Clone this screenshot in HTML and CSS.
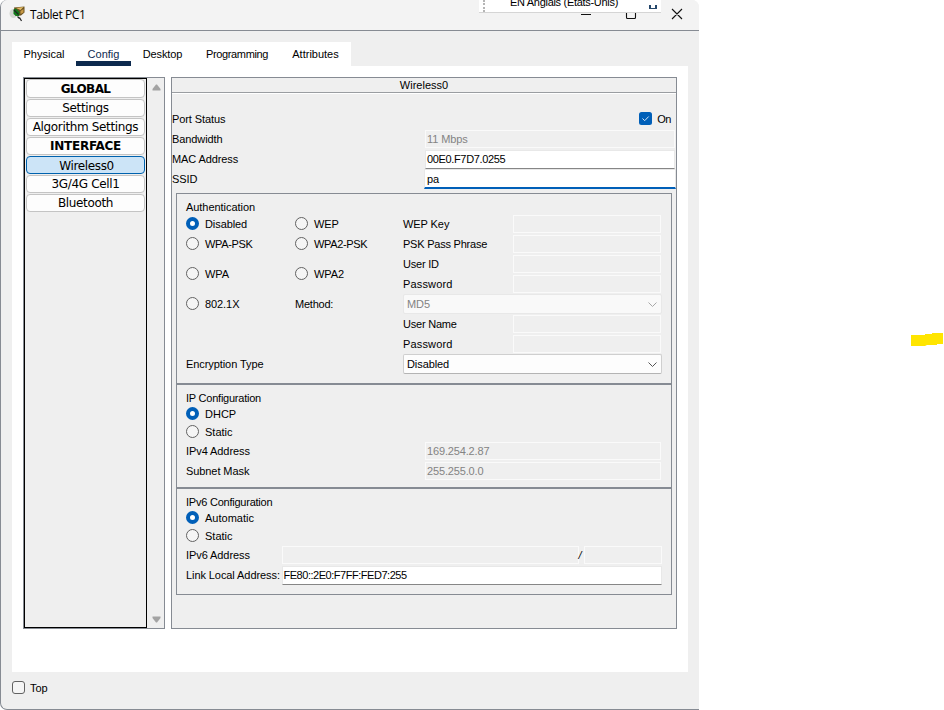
FILE: index.html
```
<!DOCTYPE html>
<html lang="en">
<head>
<meta charset="utf-8">
<title>Tablet PC1</title>
<link rel="stylesheet" href="styles.css">
</head>
<body>
<div class="window">
  <header class="titlebar">
    <svg class="app-icon" width="16" height="16" viewBox="0 0 16 16">
      <ellipse cx="4.500" cy="7.500" rx="4" ry="4.500" fill="#d3d6d1"/>
      <path d="M5 1.500L15.500 .5V6.500L12 9.500 6.500 10z" fill="#6d5320"/>
      <path d="M7 2L14.500 1 11.500 4z" fill="#e5bd68"/>
      <path d="M11.500 5L14.500 3V6.500L11.500 8z" fill="#c89a45"/>
      <path d="M4.500 3.500L7 2.500 10.500 6 10 10 7 10 4.500 8z" fill="#107a18"/>
      <path d="M5 4L9.500 8.500M8.500 10.500L10.500 12.500M10.500 11.500L12.500 15" stroke="#222" stroke-width="1.200" fill="none"/>
    </svg>
    <h1 class="title">Tablet PC1</h1>
    <div class="controls">
      <svg width="102" height="12" viewBox="0 0 102 12">
        <path d="M0 6.500H10M45.500 1V9.500Q45.500 10.500 46.500 10.500H53.500Q54.500 10.500 54.500 9.500V1M91 1L101 11M101 1L91 11" stroke="#111" stroke-width="1.100" fill="none"/>
      </svg>
    </div>
  </header>

  <div class="client">
    <nav class="tabs">
      <span class="tab t1">Physical</span>
      <span class="tab t2 active">Config</span>
      <span class="tab t3">Desktop</span>
      <span class="tab t4">Programming</span>
      <span class="tab t5">Attributes</span>
    </nav>
    <main class="page">
      <aside class="side">
        <div class="side-list">
          <div class="item head tight">GLOBAL</div>
          <div class="item">Settings</div>
          <div class="item">Algorithm Settings</div>
          <div class="item head">INTERFACE</div>
          <div class="item selected">Wireless0</div>
          <div class="item">3G/4G Cell1</div>
          <div class="item">Bluetooth</div>
        </div>
        <div class="scroll">
          <svg width="9" height="7" viewBox="0 0 9 7"><path d="M4 .5H5L8.500 5V6.500H.5V5z" fill="#a3a3a3"/></svg>
          <svg width="9" height="7" viewBox="0 0 9 7"><path d="M4 6.500H5L8.500 2V.5H.5V2z" fill="#a3a3a3"/></svg>
        </div>
      </aside>

      <section class="panel">
        <div class="panel-title">Wireless0</div>
        <div class="port">
          <div class="row"><span>Port Status</span>
            <label class="on"><svg width="13" height="13" viewBox="0 0 13 13"><rect width="13" height="13" rx="2.500" fill="#005fb8"/><path d="M3.500 6.500L5.700 8.700 9.700 4.500" stroke="#d5e6f5" fill="none"/></svg>On</label></div>
          <div class="row"><span>Bandwidth</span><div class="field off">11 Mbps</div></div>
          <div class="row"><span>MAC Address</span><div class="field edit mac">00E0.F7D7.0255</div></div>
          <div class="row"><span>SSID</span><div class="field focus">pa</div></div>
        </div>

        <div class="group auth">
          <div class="group-title auth-title">Authentication</div>
          <div class="auth-grid">
            <label class="radio c1 r1"><i class="dot checked"></i>Disabled</label>
            <label class="radio c2 r1"><i class="dot"></i>WEP</label>
            <span class="c3 r1">WEP Key</span><div class="field off c4 r1"></div>
            <label class="radio c1 r2 psk"><i class="dot"></i>WPA-PSK</label>
            <label class="radio c2 r2 psk"><i class="dot"></i>WPA2-PSK</label>
            <span class="c3 r2 phrase">PSK Pass Phrase</span><div class="field off c4 r2"></div>
            <label class="radio c1 r34"><i class="dot"></i>WPA</label>
            <label class="radio c2 r34"><i class="dot"></i>WPA2</label>
            <span class="c3 r3 phrase">User ID</span><div class="field off c4 r3"></div>
            <span class="c3 r4 wide">Password</span><div class="field off c4 r4"></div>
            <label class="radio c1 r5"><i class="dot"></i>802.1X</label>
            <span class="c2 r5 phrase">Method:</span>
            <div class="combo off-combo r5">MD5<svg width="9" height="5" viewBox="0 0 9 5"><path d="M.5 .5L4.500 4.500 8.500 .5" stroke="#a8a8a8" fill="none"/></svg></div>
            <span class="c3 r6 phrase">User Name</span><div class="field off c4 r6"></div>
            <span class="c3 r7 wide">Password</span><div class="field off c4 r7"></div>
            <span class="c1 r8">Encryption Type</span>
            <div class="combo r8">Disabled<svg width="9" height="5" viewBox="0 0 9 5"><path d="M.5 .5L4.500 4.500 8.500 .5" stroke="#555" fill="none"/></svg></div>
          </div>
        </div>

        <div class="group ip">
          <div class="group-title">IP Configuration</div>
          <label class="radio"><i class="dot checked"></i>DHCP</label>
          <label class="radio"><i class="dot"></i>Static</label>
          <div class="row"><span>IPv4 Address</span><div class="field off">169.254.2.87</div></div>
          <div class="row"><span>Subnet Mask</span><div class="field off">255.255.0.0</div></div>
        </div>

        <div class="group ip last">
          <div class="group-title">IPv6 Configuration</div>
          <label class="radio"><i class="dot checked"></i>Automatic</label>
          <label class="radio"><i class="dot"></i>Static</label>
          <div class="row v6"><span>IPv6 Address</span><div class="field off addr"></div><b class="slash">/</b><div class="field off prefix"></div></div>
          <div class="row v6"><span>Link Local Address:</span><div class="field edit link">FE80::2E0:F7FF:FED7:255</div></div>
        </div>
      </section>
    </main>
    <label class="top"><i class="box"></i>Top</label>
  </div>
</div>
<div class="langbar"><i class="grip"></i><span>EN Anglais (États-Unis)</span><i class="restore"></i></div>
<svg class="mark" width="32" height="15" viewBox="0 0 32 15"><path d="M0 2H14V1H21V0H32V11H26V12H16L14 13H0z" fill="#ffe500"/></svg>
</body>
</html>
```

FILE: styles.css
```
* { box-sizing: border-box; }
body {
  margin: 0;
  width: 944px;
  height: 710px;
  overflow: hidden;
  position: relative;
  background: #fff;
  color: #000;
  font: 11px/14px "Liberation Sans", Arial, sans-serif;
}
.window {
  width: 699px;
  height: 710px;
  background: #efefef;
  border-left: 1px solid #868b93;
  border-bottom: 1px solid #868b93;
  border-radius: 7px 7px 0 7px;
}
.titlebar {
  height: 31px;
  display: flex;
  align-items: center;
  padding: 0 16px 2px 8px;
  background: #f3f3f3;
  border-bottom: 1px solid #868b93;
  border-radius: 7px 7px 0 0;
}
.title {
  margin: 2px 0 0 5px;
  font: 12px/16px "Open Sans", "Noto Sans", sans-serif;
  letter-spacing: -0.4px;
}
.controls { margin-left: auto; display: flex; }
.client { padding: 11px 11px 0; }
.tabs {
  width: 339px;
  height: 24px;
  display: flex;
  background: #fff;
}
.tab {
  height: 24px;
  padding-top: 5px;
  text-align: center;
  white-space: nowrap;
}
.t1 { width: 64px; }
.t2 { width: 55px; }
.t3 { width: 63px; letter-spacing: -0.1px; }
.t4 { width: 86px; letter-spacing: -0.35px; }
.t5 { width: 71px; }
.active { border-bottom: 5px solid #0d2a4e; color: #0d2a4e; }
.page {
  height: 606px;
  padding: 11px 11px 0;
  display: flex;
  gap: 6px;
  background: #fff;
}
.side {
  width: 142px;
  height: 552px;
  display: flex;
  border: 1px solid #868b93;
  background: #efefef;
}
.side-list {
  width: 123px;
  padding: 1px 1px;
  display: flex;
  flex-direction: column;
  gap: 1px;
  border: 1px solid #000;
}
.item {
  height: 18px;
  border: 1px solid #c4c4c4;
  border-radius: 4px;
  background: #fdfdfd;
  text-align: center;
  white-space: nowrap;
  font: 12px/16px "DejaVu Sans", Verdana, sans-serif;
  letter-spacing: -0.35px;
}
.side-list .item:first-child { margin-top: -1px; height: 19px; padding-top: 1px; }
.head { font-weight: bold; letter-spacing: -0.25px; }
.tight { letter-spacing: -0.6px; }
.selected {
  border-color: #0062ae;
  background: #cce4f7;
  padding: 1px 0 0 2px;
}
.scroll {
  flex: 1;
  display: flex;
  flex-direction: column;
  justify-content: space-between;
  align-items: center;
  padding: 6px 0 5px 1px;
}
.panel {
  width: 506px;
  height: 552px;
  border: 1px solid #868b93;
  background: #efefef;
}
.panel-title {
  height: 15px;
  text-align: center;
  border-bottom: 1px solid #9a9da1;
  box-shadow: 0 1px #fff;
}
.port { padding: 16px 0 4px; letter-spacing: -0.1px; }
.row {
  height: 20px;
  display: flex;
  align-items: center;
  justify-content: space-between;
  white-space: nowrap;
}
.on { display: flex; gap: 5px; align-items: center; padding-right: 5px; letter-spacing: -0.4px; }
.on svg { margin-bottom: 1px; }
.field {
  height: 18px;
  width: 250px;
  padding: 1px 0 0 1px;
  border: 1px solid #e8e8e8;
  line-height: 14px;
}
.off { border-color: #fafafa; color: #838383; }
.edit { background: #fff; border-bottom-color: #868686; height: 19px; }
.mac { letter-spacing: -0.35px; }
.link { letter-spacing: -0.47px; }
.focus {
  height: 20px;
  width: 252px;
  padding: 2px 0 0 2px;
  background: #fff;
  border-bottom: 2px solid #005fb8;
}
.port .off, .port .edit { margin-right: 1px; }
.port .focus { margin-right: 0; }
.group {
  width: 496px;
  margin-left: 4px;
  padding: 5px 9px 0;
  border: 1px solid #868b93;
}
.auth { height: 191px; }
.ip { height: 104px; }
.last { height: 107px; }
.group-title { height: 16px; line-height: 16px; letter-spacing: -0.23px; }
.auth-title { letter-spacing: -0.05px; }
.auth-grid {
  display: grid;
  grid-template-columns: 109px 108px 110px 149px;
  grid-template-rows: repeat(8, 20px);
  align-items: center;
  white-space: nowrap;
  margin-top: -1px;
  letter-spacing: -0.08px;
}
.c1 { grid-column: 1; }
.c2 { grid-column: 2; }
.c3 { grid-column: 3; }
.c4 { grid-column: 4; }
.r1 { grid-row: 1; }
.r2 { grid-row: 2; }
.r3 { grid-row: 3; }
.r4 { grid-row: 4; }
.r34 { grid-row: 3 / 5; }
.r5 { grid-row: 5; }
.r6 { grid-row: 6; }
.r7 { grid-row: 7; }
.r8 { grid-row: 8; }
.psk { letter-spacing: -0.35px; }
.phrase { letter-spacing: -0.22px; }
.wide { letter-spacing: 0.15px; }
.auth-grid .field { width: 148px; }
.combo {
  grid-column: 3 / 5;
  width: 259px;
  height: 20px;
  padding: 0 4px 0 3px;
  display: flex;
  align-items: center;
  justify-content: space-between;
  border: 1px solid #cfcfcf;
  border-bottom-color: #b4b4b4;
  border-radius: 2px;
  background: #fdfdfd;
}
.combo svg { margin-top: 1px; }
.off-combo {
  border-color: #e8e8e8;
  background: #f9f9f9;
  color: #838383;
}
.radio { display: flex; align-items: center; gap: 6px; height: 20px; }
.ip .radio { height: 18px; }
.ip .group-title { margin-bottom: -1px; }
.dot {
  width: 13px;
  height: 13px;
  margin-bottom: 1px;
  border: 1px solid #626262;
  border-radius: 50%;
  background: #f5f5f5;
}
.checked { border: 4px solid #005fb8; background: #fff; }
.ip .row { margin-right: 1px; letter-spacing: -0.08px; }
.ip .row .field { width: 236px; }
.ip .row .off { letter-spacing: -0.15px; }
.ip .v6 .edit { width: 380px; letter-spacing: -0.47px; }
.ip .v6 .addr { width: 297px; margin-left: auto; }
.ip .v6 .prefix { width: 78px; }
.ip .v6 { margin-right: 0.5px; }
.slash { width: 5px; font-weight: normal; font-style: italic; }
.top { display: flex; align-items: center; gap: 5px; height: 32px; }
.box {
  width: 13px;
  height: 13px;
  margin-bottom: 1px;
  border: 1px solid #626262;
  border-radius: 3px;
  background: #f5f5f5;
}
.langbar {
  position: absolute;
  left: 479px;
  top: 0;
  width: 182px;
  height: 13px;
  display: flex;
  background: #fff;
  border-bottom: 1px solid #d5d5d5;
}
.langbar span { margin: -5px 0 0 25px; white-space: nowrap; letter-spacing: -0.3px; }
.grip { width: 2px; margin-left: 4px; border-left: 2px dotted #b5b5b5; }
.restore {
  width: 8px;
  height: 4px;
  margin: 5px 4px 0 auto;
  border: 1px solid #25476b;
  border-width: 0 2px 1px;
}
.mark { position: absolute; left: 911px; top: 333px; }
```
